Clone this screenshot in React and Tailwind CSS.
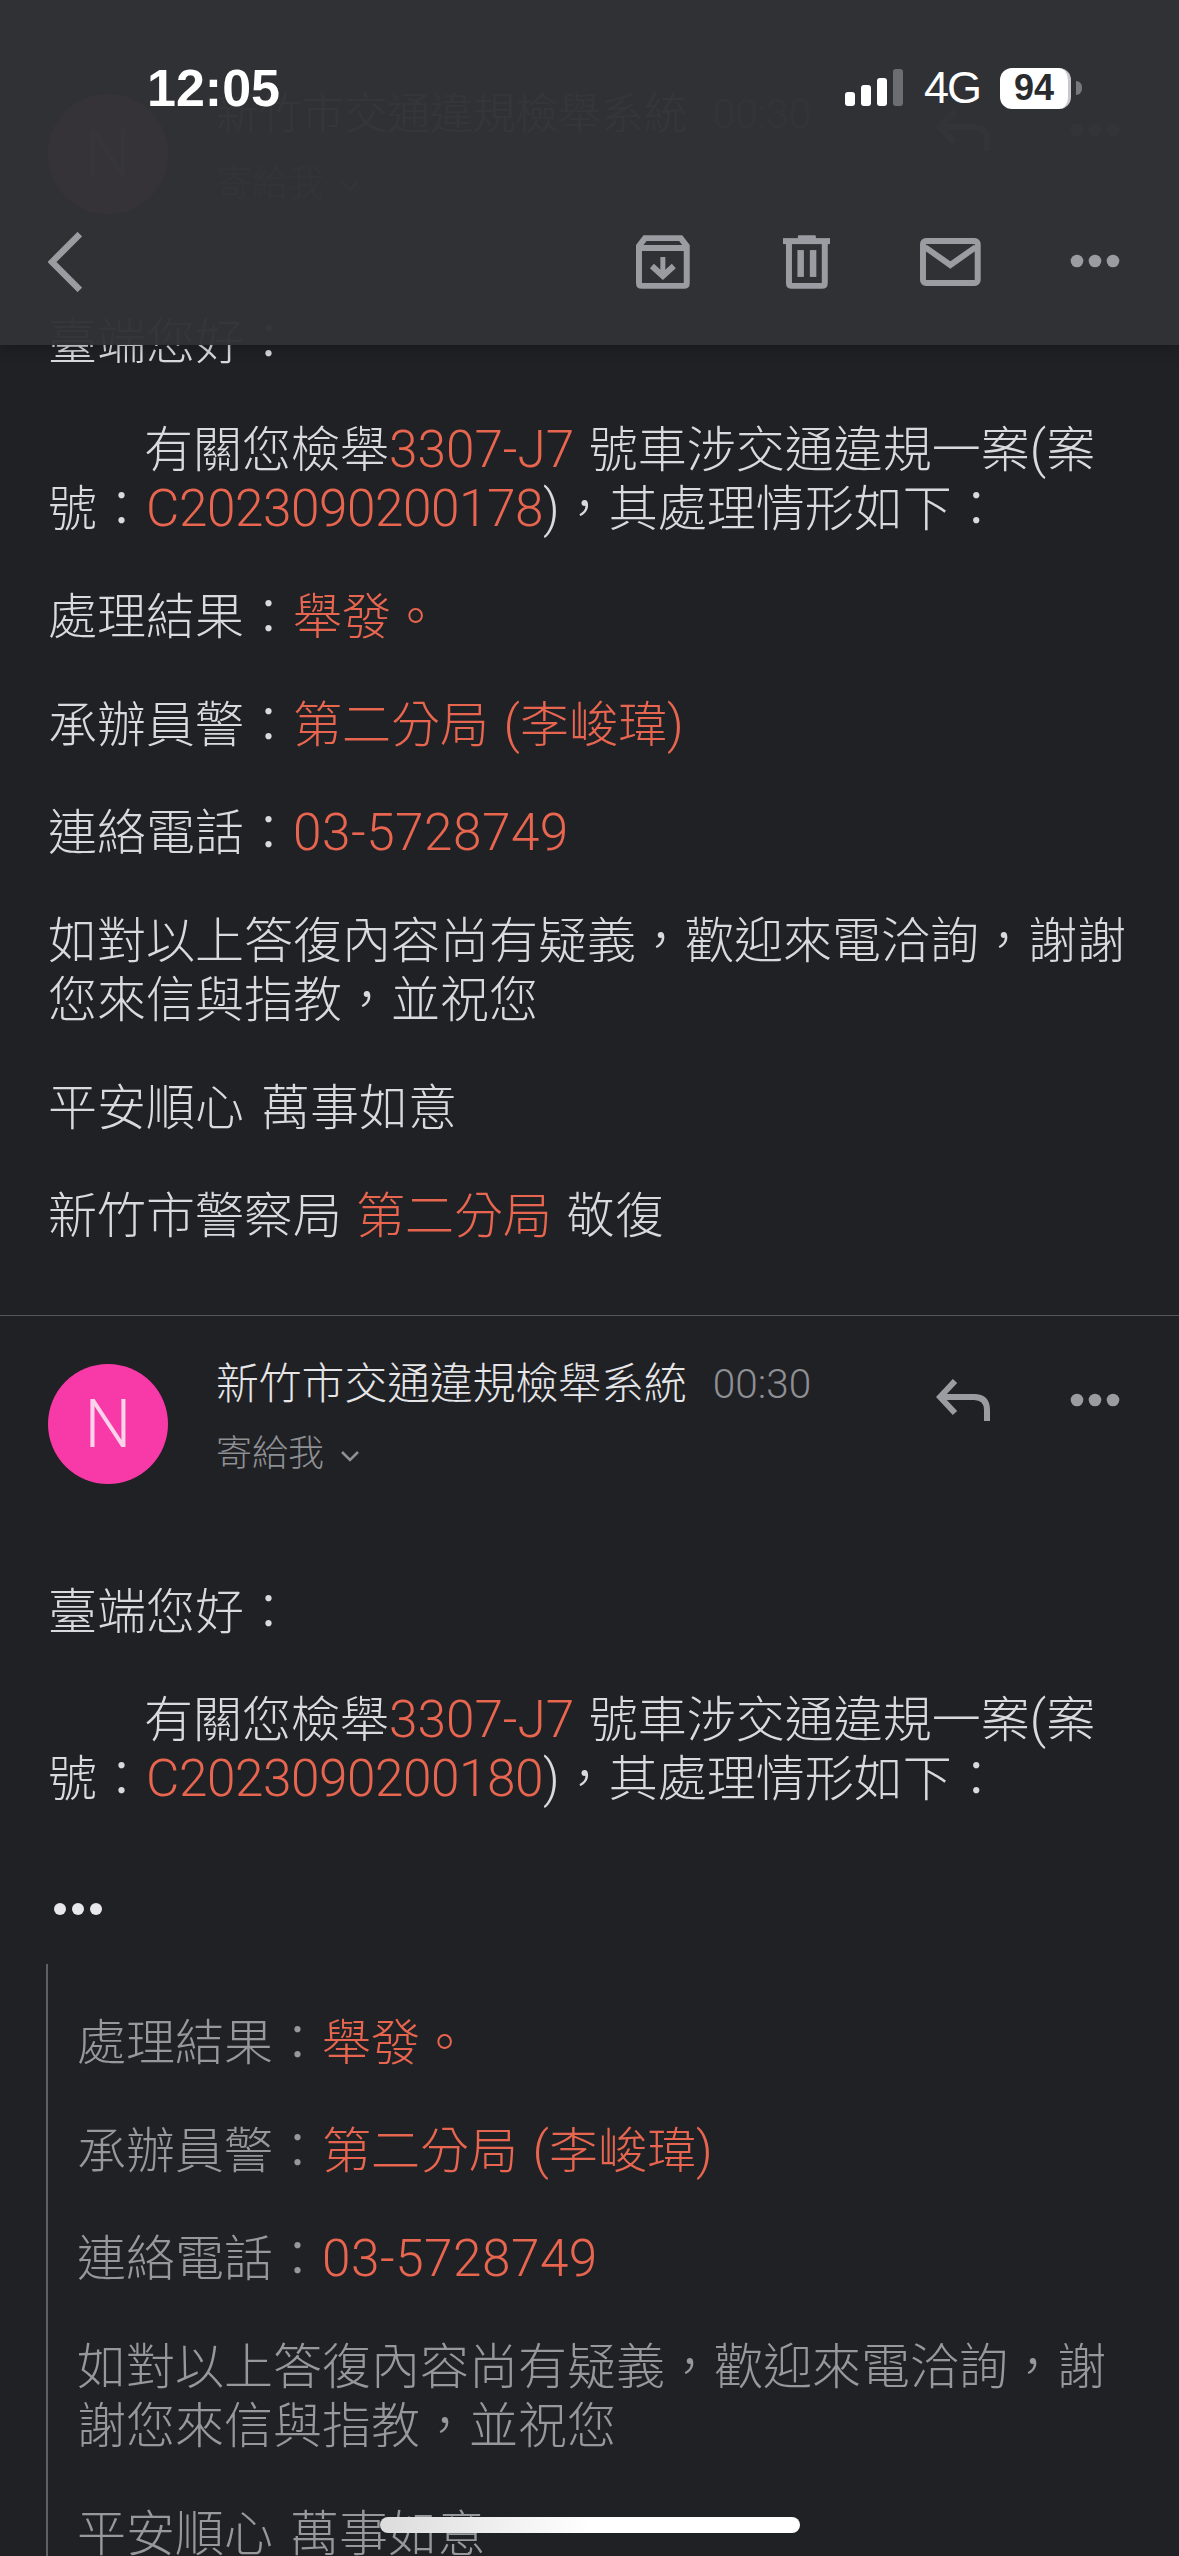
const Para = ({ children, className = '' }) => <p className={`mb-[49px] ${className}`}>{children}</p>;
const Red = ({ children }) => <span className="text-[#e8654f]">{children}</span>;
// latin runs sit a bit larger than the cjk around them
const L = ({ children, className = '' }) => <span className={`text-[51.3px] leading-none font-[350] [word-spacing:2px] ${className}`}>{children}</span>;

const Dots = () => (
  <svg width="50" height="14" viewBox="0 0 50 14" fill="#9a9ca2">
    <circle cx="7" cy="7" r="6.3" />
    <circle cx="25" cy="7" r="6.3" />
    <circle cx="43" cy="7" r="6.3" />
  </svg>
);

const SenderRow = () => (
  <div className="flex items-start pl-[48px] pr-[59px] h-[120px]">
    <div className="w-[120px] h-[120px] rounded-full bg-[#f83aa8] text-[#fbd3ea] text-[66px] flex items-center justify-center shrink-0">N</div>
    <div className="ml-[48px] flex-1">
      <div className="flex items-center h-[44px] -mt-[2px]">
        <span className="text-[42.8px] leading-[44px] text-[#e6e6e8]">新竹市交通違規檢舉系統</span>
        <span className="ml-[26px] text-[40.5px] leading-[44px] text-[#8f9094]">00:30</span>
      </div>
      <div className="flex items-center mt-[28px] h-[40px]">
        <span className="text-[36px] leading-[40px] text-[#8f9094]">寄給我</span>
        <svg className="ml-[16px] mt-[4px]" width="20" height="12" viewBox="0 0 20 12" fill="none" stroke="#8f9094" strokeWidth="2.5">
          <path d="M2 2l8 8 8-8" />
        </svg>
      </div>
    </div>
    <div className="flex items-start">
      <svg className="mt-[15px]" width="56" height="44" viewBox="0 0 56 44" fill="none" stroke="#9a9ca2" strokeWidth="6">
        <path d="M3 18H38q13 0 13 13V42" />
        <path d="M19 2 4 18l15 16" />
      </svg>
      <div className="ml-[78px] mt-[29px] flex"><Dots /></div>
    </div>
  </div>
);

const Message = ({ children, border }) => (
  <div className={`pt-[48px] ${border ? 'border-t border-[#56575a]' : ''}`}>
    <SenderRow />
    <div className="px-[48px] pt-[99px] text-[49px] leading-[59px] text-[#dadadc]">{children}</div>
  </div>
);

const StatusBar = () => (
  <div className="flex items-center justify-between h-[38px] pl-[147px] pr-[97px] text-white">
    <span className="font-['Liberation_Sans','sans-serif'] text-[52px] font-bold leading-[38px]">12:05</span>
    <div className="flex items-center">
      <svg width="58" height="38" viewBox="0 0 58 38">
        <rect x="0" y="23" width="10" height="14" rx="3" fill="#fff" />
        <rect x="16" y="16" width="10" height="21" rx="3" fill="#fff" />
        <rect x="32" y="9" width="10" height="28" rx="3" fill="#fff" />
        <rect x="48" y="0" width="10" height="37" rx="3" fill="#6c6d70" />
      </svg>
      <span className="ml-[21px] font-['Liberation_Sans','sans-serif'] font-normal text-[45px] tracking-[-2px] leading-[38px]">4G</span>
      <div className="ml-[20px] w-[71px] h-[41px] rounded-[12px] bg-white text-[#2a2b2e] text-[36px] font-bold flex items-center justify-center font-['Liberation_Sans','sans-serif'] border-r-[3px] border-[#c9c9cb]">94</div>
      <div className="ml-[5px] w-[6px] h-[14px] rounded-r-full bg-[#77787b]" />
    </div>
  </div>
);

const Toolbar = () => (
  <div className="flex items-center h-[60px] mt-[125px] pl-[48px] pr-[59px]">
    <svg width="34" height="60" viewBox="0 0 34 60" fill="none" stroke="#9a9ca2" strokeWidth="6.5">
      <path d="M32 2 4 30l28 28" />
    </svg>
    <svg className="ml-[554px]" width="54" height="54" viewBox="0 0 54 54" fill="none" stroke="#9a9ca2" strokeWidth="6">
      <path d="M3 11 9 3h36l6 8v37q0 3-3 3H6q-3 0-3-3z" />
      <path d="M3 13h48" />
      <path d="M27 22v17" strokeWidth="5" />
      <path d="M16 31l11 10 11-10" strokeWidth="6" />
    </svg>
    <svg className="ml-[93px]" width="48" height="54" viewBox="0 0 48 54" fill="#9a9ca2">
      <rect x="15" y="0" width="18" height="5" rx="1" />
      <rect x="0" y="3" width="48" height="6" />
      <path d="M6 9V48q0 3 3 3H39q3 0 3-3V9" fill="none" stroke="#9a9ca2" strokeWidth="6" />
      <rect x="14.5" y="15" width="6.5" height="27" />
      <rect x="27" y="15" width="6.5" height="27" />
    </svg>
    <svg className="ml-[90px]" width="61" height="48" viewBox="0 0 61 48" fill="none" stroke="#9a9ca2" strokeWidth="6">
      <rect x="3" y="3" width="55" height="42" rx="3" />
      <path d="M5 9l25.500 18L56 9" />
    </svg>
    <div className="ml-[89px] -mt-[2px] flex"><Dots /></div>
  </div>
);

export default function App() {
  return (
    <div className="relative w-[1179px] h-[2556px] overflow-hidden bg-[#202125] font-['Roboto','Noto_Sans_CJK_TC','sans-serif'] font-light [word-spacing:5px]">
      <div className="pt-[46px]">
        <Message>
          <Para>臺端您好：</Para>
          <Para>
            <span className="pl-[96px]">有關您檢舉<Red><L>3307-J7</L></Red><L> </L>號車涉交通違規一案<L>(</L>案</span>
            <br />號：<Red><L className="tracking-[-0.45px]">C2023090200178</L></Red><L>)</L>，其處理情形如下：
          </Para>
          <Para>處理結果：<Red>舉發。</Red></Para>
          <Para>承辦員警：<Red>第二分局<L> (</L>李峻瑋<L>)</L></Red></Para>
          <Para>連絡電話：<Red><L className="tracking-[0.5px]">03-5728749</L></Red></Para>
          <Para>如對以上答復內容尚有疑義，歡迎來電洽詢，謝謝您來信與指教，並祝您</Para>
          <Para>平安順心 萬事如意</Para>
          <p className="mb-[69px] [word-spacing:2px]">新竹市警察局 <Red>第二分局</Red> 敬復</p>
        </Message>
        <Message border>
          <Para>臺端您好：</Para>
          <p>
            <span className="pl-[96px]">有關您檢舉<Red><L>3307-J7</L></Red><L> </L>號車涉交通違規一案<L>(</L>案</span>
            <br />號：<Red><L className="tracking-[-0.45px]">C2023090200180</L></Red><L>)</L>，其處理情形如下：
          </p>
          <div className="flex gap-[6px] mt-[94px] ml-[6px]">
            <div className="w-[12px] h-[12px] rounded-full bg-[#e8e8ec]" />
            <div className="w-[12px] h-[12px] rounded-full bg-[#e8e8ec]" />
            <div className="w-[12px] h-[12px] rounded-full bg-[#e8e8ec]" />
          </div>
          <div className="mt-[49px] border-l-2 border-[#5f6063] pl-[29px] pt-[50px] text-[#97989b] -ml-[2px]">
            <Para>處理結果：<Red>舉發。</Red></Para>
            <Para>承辦員警：<Red>第二分局<L> (</L>李峻瑋<L>)</L></Red></Para>
            <Para>連絡電話：<Red><L className="tracking-[0.5px]">03-5728749</L></Red></Para>
            <Para>如對以上答復內容尚有疑義，歡迎來電洽詢，謝謝您來信與指教，並祝您</Para>
            <Para>平安順心 萬事如意</Para>
          </div>
        </Message>
      </div>

      <div className="absolute inset-x-0 top-0 h-[345px] bg-[#313236]/[0.98] pt-[69px] shadow-[0_3px_14px_rgba(0,0,0,0.25)]">
        <StatusBar />
        <Toolbar />
      </div>

      <div className="absolute left-[380px] top-[2517px] w-[420px] h-[16px] rounded-full bg-gradient-to-r from-[#dcdcdc] via-[#ffffff] to-[#ffffff]" />
    </div>
  );
}
